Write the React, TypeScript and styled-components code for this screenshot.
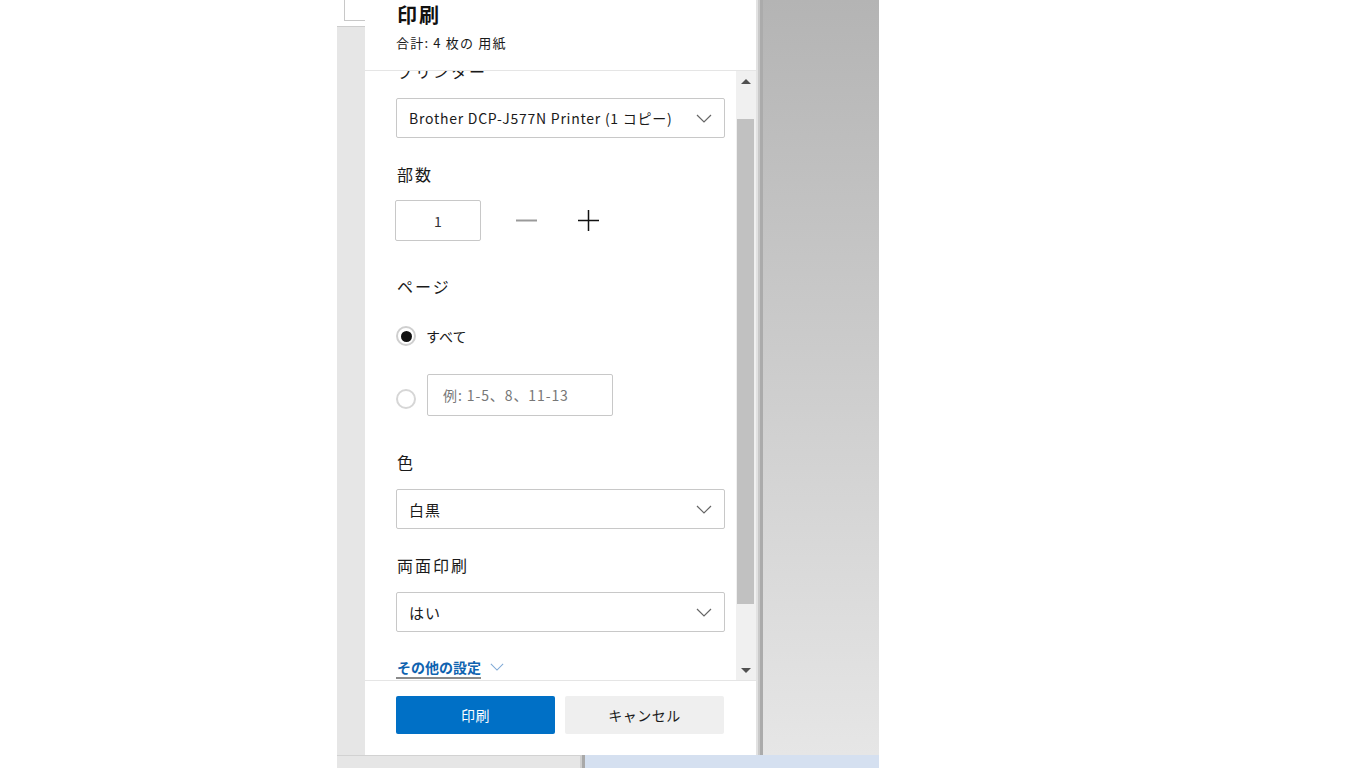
import React from 'react';
import styled, {createGlobalStyle} from 'styled-components';

const GlobalStyle = createGlobalStyle`
  html, body {
    margin: 0;
    padding: 0;
    background: #ffffff;
  }
  body {
    font-family: "Noto Sans CJK JP", "Noto Sans", sans-serif;
    color: #1a1a1a;
  }
  * {
    box-sizing: border-box;
  }
`;

const Page = styled.div`
  width: 1366px;
  height: 768px;
  display: flex;
  overflow: hidden;
`;

const Blank = styled.div<{ $w: number }>`
  width: ${p => p.$w}px;
  flex-shrink: 0;
  background: #ffffff;
`;

const Stage = styled.div`
  width: 542px;
  flex-shrink: 0;
  display: flex;
  flex-direction: column;
`;

const Main = styled.div`
  height: 755px;
  display: flex;
`;

const LeftStrip = styled.div`
  width: 28px;
  display: flex;
  flex-direction: column;
  background: #e6e6e6;
`;

const ThumbTop = styled.div`
  height: 27px;
  background: #ffffff;
  border-bottom: 1px solid #cdcdcd;
  padding-left: 7px;
`;

const ThumbCorner = styled.div`
  height: 21px;
  border-left: 1px solid #c8c8c8;
  border-bottom: 1px solid #c8c8c8;
`;

const Panel = styled.div`
  width: 391px;
  background: #ffffff;
  display: flex;
  flex-direction: column;
`;

const Shadow = styled.div`
  width: 7px;
  background: linear-gradient(to right, #e2e2e2 0 2px, #c9c9c9 2px 4px, #ababab 4px 7px);
`;

const Backdrop = styled.div`
  flex: 1;
  background: linear-gradient(to bottom, #b4b4b4 0%, #e6e6e6 100%);
`;

const BottomBar = styled.div`
  height: 13px;
  display: flex;
`;

const BottomGray = styled.div`
  width: 243px;
  background: #e6e6e6;
  border-top: 1px solid #d2d2d2;
`;

const BottomStripe = styled.div`
  width: 5px;
  background: linear-gradient(to right, #cfcfcf 0 2px, #a9a9a9 2px 5px);
`;

const BottomBlue = styled.div`
  flex: 1;
  background: #d5e0f0;
`;

const Header = styled.div`
  height: 71px;
  padding: 2px 0 0 32px;
  border-bottom: 1px solid #e5e5e5;
`;

const Title = styled.div`
  font-size: 20px;
  font-weight: 700;
  line-height: 26px;
  letter-spacing: 2px;
  color: #111;
`;

const Subtitle = styled.div`
  margin-top: 5px;
  margin-left: -1px;
  font-size: 13px;
  line-height: 20px;
  letter-spacing: 1.2px;
  color: #1a1a1a;
`;

const Body = styled.div`
  flex: 1;
  display: flex;
  min-height: 0;
`;

const Scroller = styled.div`
  flex: 1;
  overflow: hidden;
`;

const Inner = styled.div`
  margin-top: -12px;
  padding: 0 11px 0 31px;
  display: flex;
  flex-direction: column;
`;

const Label = styled.div<{ $mt?: number }>`
  margin-top: ${p => p.$mt ?? 0}px;
  font-size: 16px;
  line-height: 24px;
  letter-spacing: 2px;
  padding-left: 1px;
  color: #1a1a1a;
`;

const Select = styled.div<{ $mt?: number }>`
  margin-top: ${p => p.$mt ?? 15}px;
  height: 40px;
  border: 1px solid #c8c8c8;
  border-radius: 2px;
  display: flex;
  align-items: center;
  justify-content: space-between;
  padding: 0 12px 0 12px;
  color: #1a1a1a;
`;

const SelectText = styled.span<{ $latin?: boolean }>`
  font-size: ${p => p.$latin ? 14 : 15}px;
  letter-spacing: ${p => p.$latin ? 0.75 : 1}px;
  white-space: nowrap;
`;

const CopiesRow = styled.div`
  margin-top: 14px;
  margin-left: -1px;
  display: flex;
  align-items: center;
`;

const CopiesInput = styled.div`
  width: 86px;
  height: 41px;
  border: 1px solid #c8c8c8;
  border-radius: 2px;
  display: flex;
  align-items: center;
  justify-content: center;
  font-size: 14px;
  color: #333;
`;

const StepButton = styled.div<{ $ml: number }>`
  margin-left: ${p => p.$ml}px;
  width: 21px;
  height: 21px;
  display: flex;
  align-items: center;
  justify-content: center;
`;

const RadioRow = styled.div<{ $mt: number }>`
  margin-top: ${p => p.$mt}px;
  display: flex;
  align-items: center;
`;

const Radio = styled.div<{ $checked?: boolean; $drop?: number }>`
  width: 20px;
  height: 20px;
  margin-top: ${p => p.$drop ?? 0}px;
  border-radius: 50%;
  border: 2px solid ${p => p.$checked ? '#cfcfcf' : '#d6d6d6'};
  display: flex;
  align-items: center;
  justify-content: center;
  flex-shrink: 0;
  &::after {
    content: '';
    display: ${p => p.$checked ? 'block' : 'none'};
    width: 11px;
    height: 11px;
    border-radius: 50%;
    background: #111;
  }
`;

const RadioText = styled.span`
  margin-left: 10px;
  font-size: 14px;
  line-height: 24px;
  color: #1a1a1a;
`;

const RangeInput = styled.div`
  margin-left: 11px;
  width: 186px;
  height: 42px;
  border: 1px solid #c8c8c8;
  border-radius: 2px;
  display: flex;
  align-items: center;
  padding-left: 15px;
  font-size: 14px;
  letter-spacing: 0.9px;
  color: #777;
`;

const MoreRow = styled.div`
  margin-top: 25px;
  display: flex;
  align-items: flex-start;
`;

const MoreLink = styled.span`
  font-size: 14px;
  line-height: 20px;
  font-weight: 700;
  color: #0f63b0;
  border-bottom: 2px solid #8a8a8a;
  padding-left: 1px;
`;

const MoreChevron = styled.span`
  margin-left: 9px;
  margin-top: 6px;
  display: flex;
`;

const ScrollBar = styled.div`
  width: 20px;
  background: #f0f0f0;
  display: flex;
  flex-direction: column;
  align-items: center;
`;

const ArrowBox = styled.div`
  height: 20px;
  width: 100%;
  display: flex;
  align-items: center;
  justify-content: center;
`;

const Triangle = styled.div<{ $down?: boolean }>`
  width: 0;
  height: 0;
  border-left: 5px solid transparent;
  border-right: 5px solid transparent;
  ${p => p.$down ? 'border-top: 5px solid #505050;' : 'border-bottom: 5px solid #505050;'}
`;

const Track = styled.div`
  flex: 1;
  width: 100%;
  padding: 28px 2px 0 1px;
`;

const Thumb = styled.div`
  height: 485px;
  background: #c1c1c1;
`;

const Footer = styled.div`
  border-top: 1px solid #e5e5e5;
  padding: 15px 32px 21px 31px;
  display: flex;
  gap: 10px;
`;

const Button = styled.div<{ $primary?: boolean }>`
  flex: 1;
  height: 38px;
  border-radius: 2px;
  display: flex;
  align-items: center;
  justify-content: center;
  font-size: 14px;
  letter-spacing: 0.5px;
  background: ${p => p.$primary ? '#0070c6' : '#efefef'};
  color: ${p => p.$primary ? '#ffffff' : '#1a1a1a'};
`;

const Chevron = ({color = '#666', w = 16}: { color?: string; w?: number }) => (
    <svg width={w} height={w / 2 + 1} viewBox="0 0 16 9">
        <path d="M1 1 L8 8 L15 1" fill="none" stroke={color} strokeWidth="1.2"/>
    </svg>
);

function App() {
    return (
        <Page>
            <GlobalStyle/>
            <Blank $w={337}/>
            <Stage>
                <Main>
                    <LeftStrip>
                        <ThumbTop>
                            <ThumbCorner/>
                        </ThumbTop>
                    </LeftStrip>
                    <Panel>
                        <Header>
                            <Title>印刷</Title>
                            <Subtitle>合計: 4 枚の 用紙</Subtitle>
                        </Header>
                        <Body>
                            <Scroller>
                                <Inner>
                                    <Label>プリンター</Label>
                                    <Select>
                                        <SelectText $latin>Brother DCP-J577N Printer (1 コピー)</SelectText>
                                        <Chevron/>
                                    </Select>

                                    <Label $mt={24}>部数</Label>
                                    <CopiesRow>
                                        <CopiesInput>1</CopiesInput>
                                        <StepButton $ml={35}>
                                            <svg width="21" height="21" viewBox="0 0 21 21">
                                                <path d="M0 10.5 H21" stroke="#9a9a9a" strokeWidth="2"/>
                                            </svg>
                                        </StepButton>
                                        <StepButton $ml={41}>
                                            <svg width="21" height="21" viewBox="0 0 21 21">
                                                <path d="M0 10.5 H21 M10.5 0 V21" stroke="#111" strokeWidth="1.5"/>
                                            </svg>
                                        </StepButton>
                                    </CopiesRow>

                                    <Label $mt={33}>ページ</Label>
                                    <RadioRow $mt={26}>
                                        <Radio $checked/>
                                        <RadioText>すべて</RadioText>
                                    </RadioRow>
                                    <RadioRow $mt={26}>
                                        <Radio $drop={8}/>
                                        <RangeInput>例: 1-5、8、11-13</RangeInput>
                                    </RadioRow>

                                    <Label $mt={34}>色</Label>
                                    <Select>
                                        <SelectText>白黒</SelectText>
                                        <Chevron/>
                                    </Select>

                                    <Label $mt={24}>両面印刷</Label>
                                    <Select>
                                        <SelectText>はい</SelectText>
                                        <Chevron/>
                                    </Select>

                                    <MoreRow>
                                        <MoreLink>その他の設定</MoreLink>
                                        <MoreChevron>
                                            <Chevron color="#7fa9d6" w={14}/>
                                        </MoreChevron>
                                    </MoreRow>
                                </Inner>
                            </Scroller>
                            <ScrollBar>
                                <ArrowBox><Triangle/></ArrowBox>
                                <Track><Thumb/></Track>
                                <ArrowBox><Triangle $down/></ArrowBox>
                            </ScrollBar>
                        </Body>
                        <Footer>
                            <Button $primary>印刷</Button>
                            <Button>キャンセル</Button>
                        </Footer>
                    </Panel>
                    <Shadow/>
                    <Backdrop/>
                </Main>
                <BottomBar>
                    <BottomGray/>
                    <BottomStripe/>
                    <BottomBlue/>
                </BottomBar>
            </Stage>
            <Blank $w={487}/>
        </Page>
    );
}

export default App;
